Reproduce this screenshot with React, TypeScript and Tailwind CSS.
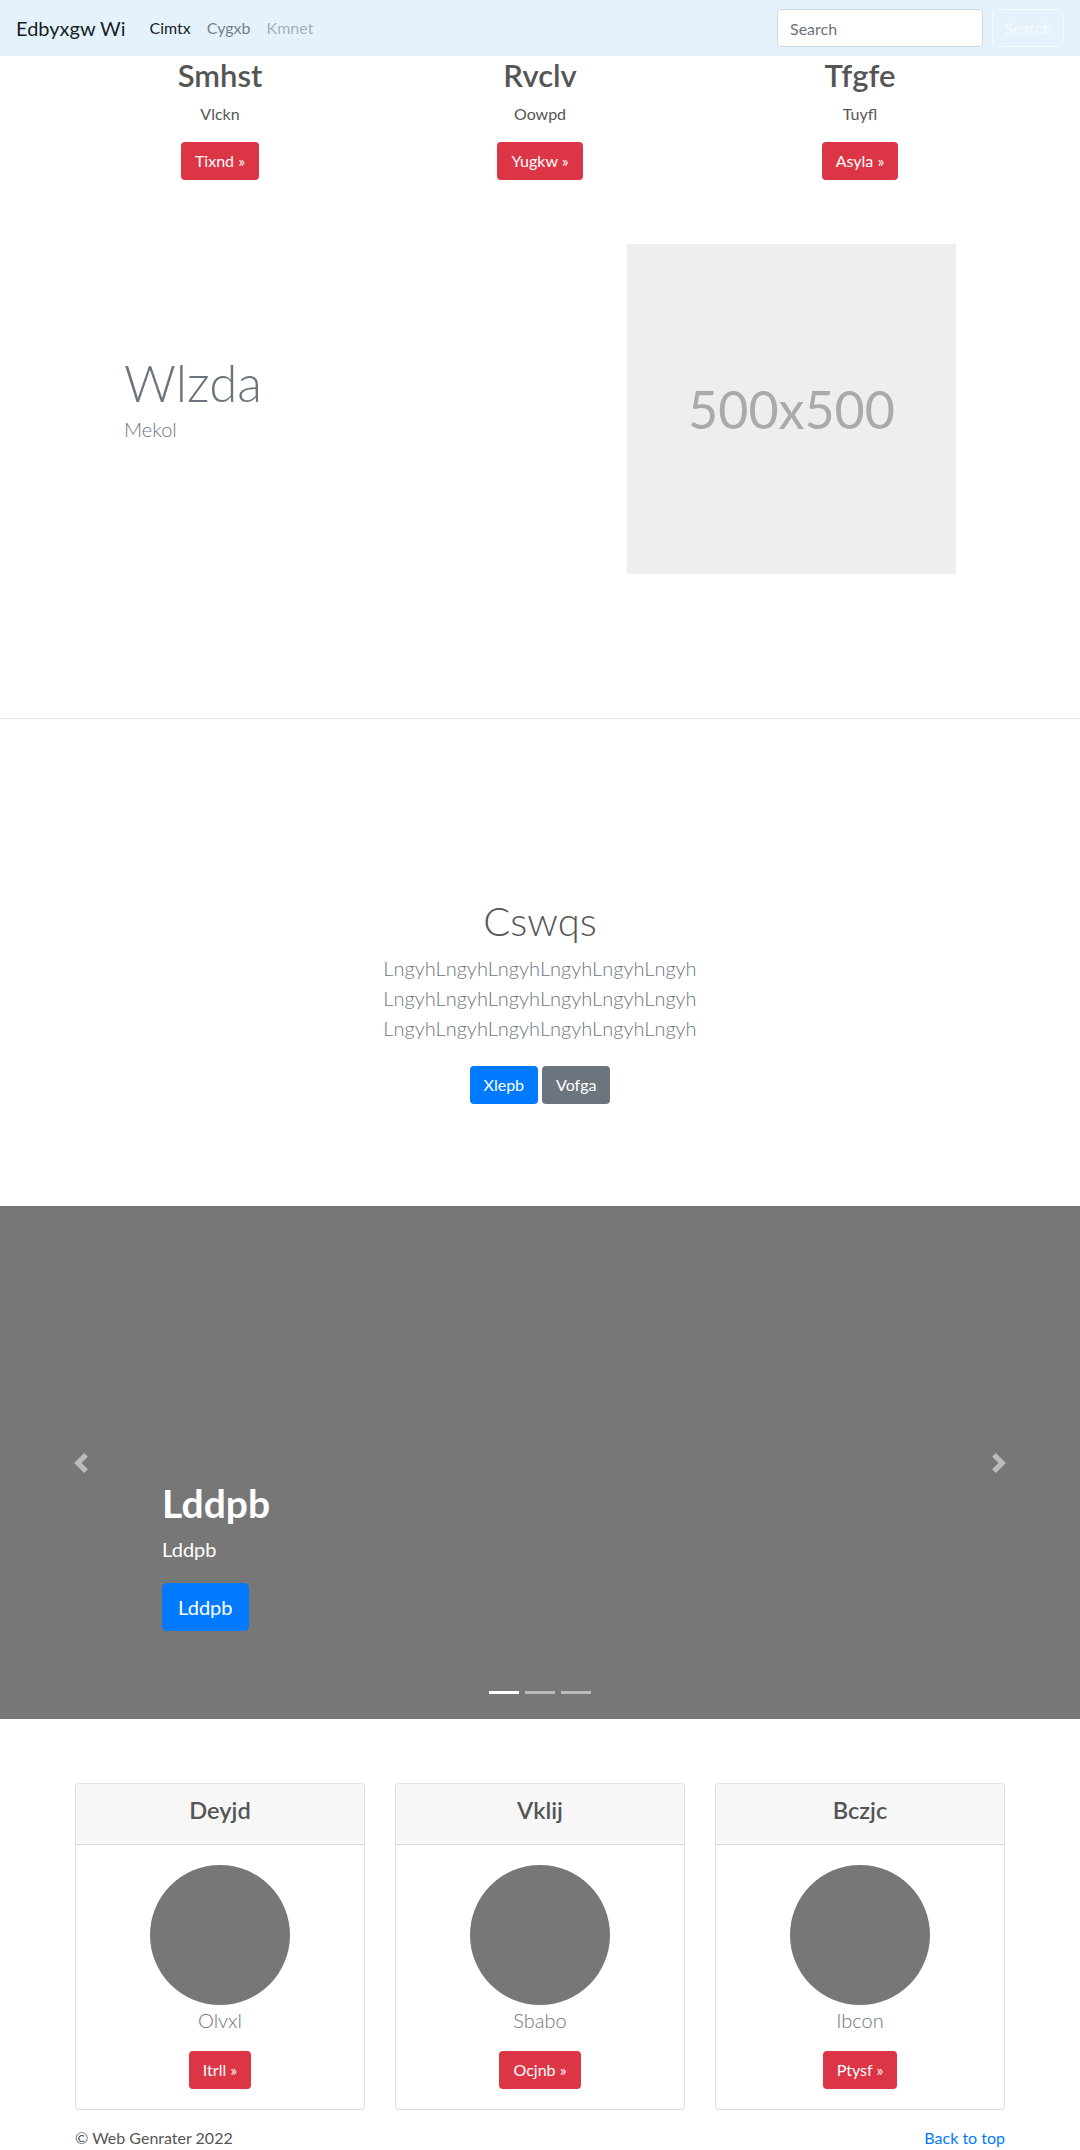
import React from "react";

function RedBtn({ label }: { label: string }) {
  return (
    <a className="inline-block h-[38px] px-[14px] leading-[38px] rounded-[4px] bg-[#dc3545] text-white text-base">
      {label} »
    </a>
  );
}

function Feature({ title, sub, btn }: { title: string; sub: string; btn: string }) {
  return (
    <div className="flex flex-col items-center text-center">
      <h2 className="mt-[1px] mb-2 text-[31px] leading-[37px] font-semibold text-[#555]">{title}</h2>
      <p className="mb-4 text-base leading-6 text-[#555]">{sub}</p>
      <RedBtn label={btn} />
    </div>
  );
}

function Card({ title, name, btn }: { title: string; name: string; btn: string }) {
  return (
    <div className="border border-[rgba(0,0,0,0.125)] rounded-[4px] overflow-hidden bg-white">
      <div className="bg-[rgba(0,0,0,0.03)] border-b border-[rgba(0,0,0,0.125)] px-5 pt-3 pb-3 text-center">
        <h4 className="mb-2 text-[23.6px] leading-[28px] font-semibold text-[#555]">{title}</h4>
      </div>
      <div className="p-5 flex flex-col items-center text-center">
        <div className="w-[140px] h-[140px] rounded-full bg-[#777]" />
        <p className="mb-4 text-[20px] leading-[30px] font-light text-[#6c757d]">{name}</p>
        <RedBtn label={btn} />
      </div>
    </div>
  );
}

export default function App() {
  const lng = "LngyhLngyhLngyhLngyhLngyhLngyh";
  return (
    <div className="w-[1080px] bg-white font-['Lato',sans-serif] text-[#555]">
      {/* Navbar */}
      <nav className="h-14 bg-[#e3f2fd] flex items-center pl-4 pr-4">
        <span className="text-[20px] leading-[30px] text-[rgba(0,0,0,0.9)] mr-4">Edbyxgw Wi</span>
        <div className="flex items-center text-base leading-6">
          <a className="px-2 text-[rgba(0,0,0,0.9)]">Cimtx</a>
          <a className="px-2 text-[rgba(0,0,0,0.5)]">Cygxb</a>
          <a className="px-2 text-[rgba(0,0,0,0.3)]">Kmnet</a>
        </div>
        <div className="ml-auto flex items-center">
          <input
            placeholder="Search"
            className="w-[206px] h-[38px] px-3 mr-[9px] bg-white border border-[#ced4da] rounded-[4px] text-base text-[#495057] placeholder:text-[#6c757d] outline-none"
          />
          <button className="w-[72px] h-[38px] border border-[#f8f9fa] rounded-[4px] text-[#f8f9fa] text-base">
            Search
          </button>
        </div>
      </nav>

      {/* Features */}
      <div className="w-[960px] mx-auto grid grid-cols-3">
        <Feature title="Smhst" sub="Vlckn" btn="Tixnd" />
        <Feature title="Rvclv" sub="Oowpd" btn="Yugkw" />
        <Feature title="Tfgfe" sub="Tuyfl" btn="Asyla" />
      </div>

      {/* Featurette */}
      <div className="pt-16 pb-[144px] border-b border-[#e5e5e5]">
        <div className="flex items-center">
          <div className="w-[627px] pl-[124px]">
            <h1 className="text-[51px] leading-[63px] font-light text-[#6c757d]">Wlzda</h1>
            <p className="mb-6 text-[20px] leading-[30px] font-light text-[#6c757d]">Mekol</p>
          </div>
          <div className="w-[329px] h-[330px] bg-[#eee] flex items-center justify-center">
            <span className="text-[52px] text-[#aaa] leading-none">500x500</span>
          </div>
        </div>
      </div>

      {/* Jumbotron-like */}
      <section className="pt-[178px] pb-[102px] text-center">
        <h1 className="mb-2 text-[40px] leading-[48px] font-light text-[#555]">Cswqs</h1>
        <p className="text-[20px] leading-[30px] font-light text-[#6c757d]">
          <span className="block">{lng}</span>
          <span className="block">{lng}</span>
          <span className="block">{lng}</span>
        </p>
        <div className="mt-[23px] flex justify-center gap-1">
          <a className="h-[38px] px-[14px] leading-[38px] rounded-[4px] bg-[#007bff] text-white text-base">Xlepb</a>
          <a className="h-[38px] px-[14px] leading-[38px] rounded-[4px] bg-[#6c757d] text-white text-base">Vofga</a>
        </div>
      </section>

      {/* Carousel */}
      <div className="relative h-[513px] bg-[#777]">
        <div className="absolute left-0 top-0 bottom-0 w-[162px] flex items-center justify-center">
          <svg width="20" height="20" viewBox="0 0 8 8" className="opacity-50">
            <path fill="#fff" d="M5.25 0l-4 4 4 4 1.5-1.5L4.25 4l2.5-2.5L5.25 0z" />
          </svg>
        </div>
        <div className="absolute right-0 top-0 bottom-0 w-[162px] flex items-center justify-center">
          <svg width="20" height="20" viewBox="0 0 8 8" className="opacity-50">
            <path fill="#fff" d="M2.75 0l-1.5 1.5L3.75 4l-2.5 2.5L2.75 8l4-4-4-4z" />
          </svg>
        </div>
        <div className="absolute left-[162px] top-[274px] text-left text-white">
          <h1 className="mb-2 text-[39px] leading-[46px] font-bold">Lddpb</h1>
          <p className="mb-[19px] text-[20px] leading-[30px]">Lddpb</p>
          <a className="inline-block h-12 px-4 leading-[48px] rounded-[5px] bg-[#007bff] text-white text-[20px]">Lddpb</a>
        </div>
        <div className="absolute left-0 right-0 top-[485px] flex justify-center gap-[6px]">
          <span className="w-[30px] h-[3px] bg-white" />
          <span className="w-[30px] h-[3px] bg-white opacity-50" />
          <span className="w-[30px] h-[3px] bg-white opacity-50" />
        </div>
      </div>

      {/* Cards */}
      <div className="pt-16 w-[930px] mx-auto grid grid-cols-3 gap-[30px]">
        <Card title="Deyjd" name="Olvxl" btn="Itrll" />
        <Card title="Vklij" name="Sbabo" btn="Ocjnb" />
        <Card title="Bczjc" name="Ibcon" btn="Ptysf" />
      </div>

      {/* Footer */}
      <footer className="w-[930px] mx-auto pt-4 pb-8 flex justify-between text-base leading-6">
        <p className="text-[#555]">© Web Genrater 2022</p>
        <a className="text-[#007bff]">Back to top</a>
      </footer>
    </div>
  );
}
